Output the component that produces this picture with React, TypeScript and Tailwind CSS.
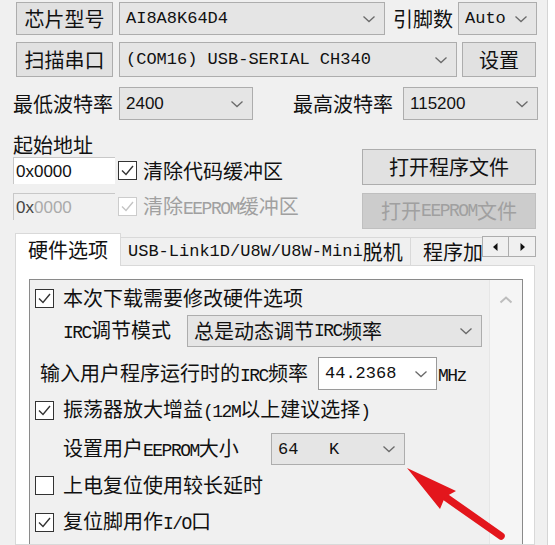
import React from "react";

// mixed Chinese / Latin label: Latin runs get the narrow mono face like the dialog's SimSun
function Mixed({ text, latin = "text-[18px] tracking-[-1.5px]" }: { text: string; latin?: string }) {
  const parts = text.match(/[\x00-\x7f]+|[^\x00-\x7f]+/g) || [];
  return (
    <>
      {parts.map((p, i) =>
        /^[\x00-\x7f]/.test(p) ? (
          <span key={i} className={"font-['Liberation_Mono',monospace] whitespace-pre " + latin}>
            {p}
          </span>
        ) : (
          <span key={i}>{p}</span>
        )
      )}
    </>
  );
}

function Chevron() {
  return (
    <svg width="14" height="8" viewBox="0 0 14 8" className="shrink-0">
      <path d="M1.5 1.5 L7 6.5 L12.5 1.5" fill="none" stroke="#6a6a6a" strokeWidth="1.3" />
    </svg>
  );
}

function Combo({
  className,
  children,
  white = false,
}: {
  className: string;
  children: React.ReactNode;
  white?: boolean;
}) {
  return (
    <div
      className={
        "h-full shrink-0 flex items-center justify-between pl-[6px] pr-[8px] border " +
        (white ? "bg-white border-[#9a9a9a] " : "bg-[#e5e5e5] border-[#adadad] ") +
        className
      }
    >
      <div className="flex items-center whitespace-pre">{children}</div>
      <Chevron />
    </div>
  );
}

function Btn({ className, children, disabled = false }: { className: string; children: React.ReactNode; disabled?: boolean }) {
  return (
    <div
      className={
        "shrink-0 flex items-center justify-center border " +
        (disabled ? "bg-[#cccccc] border-[#bfbfbf] text-[#a0a0a0] " : "bg-[#e1e1e1] border-[#adadad] ") +
        className
      }
    >
      {children}
    </div>
  );
}

function Check({ checked, disabled = false }: { checked: boolean; disabled?: boolean }) {
  return (
    <span
      className={
        "w-[19px] h-[19px] shrink-0 border bg-white flex items-center justify-center " +
        (disabled ? "border-[#cccccc]" : "border-[#333333]")
      }
    >
      {checked && (
        <svg width="15" height="15" viewBox="0 0 15 15">
          <path
            d="M2 7.5 L6 11.5 L13 3"
            fill="none"
            stroke={disabled ? "#c4c4c4" : "#333333"}
            strokeWidth="1.4"
          />
        </svg>
      )}
    </span>
  );
}

const mono = "font-['Liberation_Mono',monospace] text-[17px]";

export default function App() {
  return (
    <div className="w-[555px] h-[545px] bg-[#f0f0f0] overflow-hidden relative flex text-[#111] font-['Noto_Sans_CJK_SC',sans-serif] text-[20px] leading-none">
      <div className="w-[547px] shrink-0 flex flex-col">
        {/* chip model */}
        <div className="flex shrink-0 items-center h-[33px] mt-[2px]">
          <Btn className="ml-[16px] w-[97px] h-full">芯片型号</Btn>
          <Combo className="ml-[6px] w-[266px]">
            <span className={mono}>AI8A8K64D4</span>
          </Combo>
          <div className="ml-[8px] w-[65px] shrink-0">引脚数</div>
          <Combo className="w-[79px]">
            <span className={mono}>Auto</span>
          </Combo>
        </div>

        {/* port */}
        <div className="flex shrink-0 items-center h-[35px] mt-[7px]">
          <Btn className="ml-[16px] w-[97px] h-full">扫描串口</Btn>
          <Combo className="ml-[6px] w-[338px]">
            <span className={mono}>(COM16) USB-SERIAL CH340</span>
          </Combo>
          <Btn className="ml-[5px] w-[74px] h-full">设置</Btn>
        </div>

        {/* baud */}
        <div className="flex shrink-0 items-center h-[33px] mt-[10px]">
          <div className="ml-[13px] w-[100px] shrink-0">最低波特率</div>
          <Combo className="ml-[6px] w-[134px]">
            <span className="font-['Liberation_Sans',sans-serif] text-[17px]">2400</span>
          </Combo>
          <div className="ml-[40px] w-[100px] shrink-0 text-right">最高波特率</div>
          <Combo className="ml-[10px] w-[135px]">
            <span className="font-['Liberation_Sans',sans-serif] text-[17px]">115200</span>
          </Combo>
        </div>

        {/* address + files */}
        <div className="flex shrink-0 mt-[14px]">
          <div className="flex flex-col ml-[13px]">
            <div className="h-[22px] flex items-center">起始地址</div>
            <div className="flex items-center h-[27px] mt-[1px]">
              <div className="w-[102px] h-full bg-white border border-[#c8c8c8] border-r-0 border-b-0 flex items-center pl-[2px] font-['Liberation_Sans',sans-serif] text-[17px]">
                0x0000
              </div>
              <span className="ml-[3px]">
                <Check checked />
              </span>
              <span className="ml-[6px]">清除代码缓冲区</span>
            </div>
            <div className="flex items-center h-[27px] mt-[9px]">
              <div className="w-[102px] h-full bg-[#f0f0f0] border border-[#c8c8c8] border-r-0 border-b-0 flex items-center pl-[2px] font-['Liberation_Sans',sans-serif] text-[17px]">
                <span className="text-[#444]">0x</span>
                <span className="text-[#aaaaaa]">0000</span>
              </div>
              <span className="ml-[3px]">
                <Check checked disabled />
              </span>
              <span className="ml-[6px] text-[#a0a0a0]">
                <Mixed text="清除EEPROM缓冲区" />
              </span>
            </div>
          </div>
          <div className="flex flex-col ml-auto mr-[11px] mt-[15px]">
            <Btn className="w-[174px] h-[36px]">打开程序文件</Btn>
            <Btn disabled className="w-[174px] h-[36px] mt-[8px]">
              <Mixed text="打开EEPROM文件" />
            </Btn>
          </div>
        </div>

        {/* tabs */}
        <div className="flex shrink-0 h-[33px] mt-[4px] ml-[15px] -mb-px relative z-10">
          <div className="h-[33px] w-[106px] shrink-0 bg-white border border-b-0 border-[#d9d9d9] flex items-center justify-center">
            硬件选项
          </div>
          <div className="self-end h-[29px] w-[290px] shrink-0 bg-[#f0f0f0] border border-l-0 border-[#d9d9d9] flex items-center pl-[7px] whitespace-nowrap">
            <Mixed text="USB-Link1D/U8W/U8W-Mini" latin="text-[17px]" />
            脱机
          </div>
          <div className="self-end h-[29px] w-[71px] shrink-0 bg-[#f0f0f0] border border-l-0 border-r-0 border-[#d9d9d9] flex items-center pl-[12px] overflow-hidden whitespace-nowrap">
            程序加载
          </div>
          <div className="self-start mt-[3px] h-[21px] w-[54px] shrink-0 flex">
            <div className="w-[27px] h-full border border-[#adadad] bg-[#f0f0f0] flex items-center justify-center">
              <svg width="5" height="8" viewBox="0 0 5 8">
                <path d="M4.5 0 L0 4 L4.5 8 Z" fill="#111" />
              </svg>
            </div>
            <div className="w-[27px] h-full border border-l-0 border-[#adadad] bg-[#f0f0f0] flex items-center justify-center">
              <svg width="5" height="8" viewBox="0 0 5 8">
                <path d="M0.5 0 L5 4 L0.5 8 Z" fill="#111" />
              </svg>
            </div>
          </div>
        </div>

        {/* tab panel */}
        <div className="ml-[15px] w-[520px] flex-1 min-h-0 overflow-hidden bg-white border border-[#d9d9d9] pl-[13px] pt-[13px]">
          <div className="w-[494px] h-[320px] border border-[#8a8a8a] bg-[#f0f0f0] flex">
            <div className="flex-1 flex flex-col">
              <div className="flex shrink-0 items-center h-[28px] mt-[4px]">
                <span className="ml-[5px]">
                  <Check checked />
                </span>
                <span className="ml-[9px]">本次下载需要修改硬件选项</span>
              </div>
              <div className="flex shrink-0 items-center h-[32px] mt-[3px]">
                <div className="ml-[33px] w-[124px] shrink-0">
                  <Mixed text="IRC调节模式" />
                </div>
                <Combo className="w-[295px]">
                  <Mixed text="总是动态调节IRC频率" />
                </Combo>
              </div>
              <div className="flex shrink-0 items-center h-[33px] mt-[10px]">
                <div className="ml-[10px] w-[278px] shrink-0">
                  <Mixed text="输入用户程序运行时的IRC频率" />
                </div>
                <Combo white className="w-[119px]">
                  <span className={mono}>44.2368</span>
                </Combo>
                <span className="ml-[1px]">
                  <Mixed text="MHz" />
                </span>
              </div>
              <div className="flex shrink-0 items-center h-[24px] mt-[8px]">
                <span className="ml-[5px]">
                  <Check checked />
                </span>
                <span className="ml-[9px]">
                  <Mixed text="振荡器放大增益(12M以上建议选择)" />
                </span>
              </div>
              <div className="flex shrink-0 items-center h-[32px] mt-[11px]">
                <div className="ml-[33px] w-[208px] shrink-0">
                  <Mixed text="设置用户EEPROM大小" />
                </div>
                <Combo className="w-[134px]">
                  <span className={mono}>64   K</span>
                </Combo>
              </div>
              <div className="flex shrink-0 items-center h-[24px] mt-[8px]">
                <span className="ml-[5px]">
                  <Check checked={false} />
                </span>
                <span className="ml-[9px]">上电复位使用较长延时</span>
              </div>
              <div className="flex shrink-0 items-center h-[24px] mt-[13px]">
                <span className="ml-[5px]">
                  <Check checked />
                </span>
                <span className="ml-[9px]">
                  <Mixed text="复位脚用作I/O口" />
                </span>
              </div>
            </div>
            {/* scrollbar */}
            <div className="w-[33px] shrink-0 bg-[#f5f5f5] border-l border-[#e6e6e6] flex justify-center pt-[16px]">
              <svg width="14" height="8" viewBox="0 0 14 8">
                <path d="M1.5 6.5 L7 1.5 L12.5 6.5" fill="none" stroke="#bdbdbd" strokeWidth="2" />
              </svg>
            </div>
          </div>
        </div>
      </div>

      <div className="flex-1 bg-white border-l border-[#d5d5d5]" />

      {/* red annotation arrow */}
      <svg className="absolute left-0 top-0 pointer-events-none" width="555" height="545" viewBox="0 0 555 545">
        <line x1="444" y1="496" x2="501" y2="536" stroke="#e3161c" strokeWidth="7.5" strokeLinecap="round" />
        <path d="M407 468 L456 491 L445 497 L440 509 Z" fill="#e3161c" />
      </svg>
    </div>
  );
}
